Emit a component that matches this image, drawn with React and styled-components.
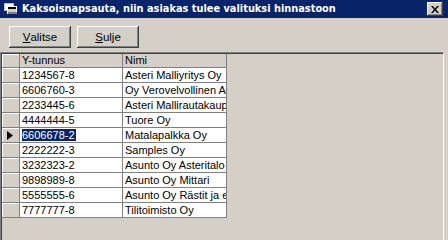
import React from 'react';
import styled, { createGlobalStyle } from 'styled-components';

const GlobalStyle = createGlobalStyle`
  html, body {
    margin: 0;
    padding: 0;
    background: #d4d0c8;
    overflow: hidden;
  }
  * { box-sizing: border-box; }
`;

const Window = styled.div`
  width: 448px;
  height: 100vh;
  min-height: 218px;
  display: flex;
  flex-direction: column;
  background: #d4d0c8;
  font-family: "Liberation Sans", Arial, sans-serif;
  font-size: 11px;
  color: #000;
  overflow: hidden;
`;

const TitleBar = styled.div`
  height: 18px;
  flex: none;
  display: flex;
  align-items: center;
  padding: 0 5px 0 4px;
  background: #0a246a;
  color: #fff;
  font-family: "DejaVu Sans", Verdana, sans-serif;
  font-weight: bold;
  font-size: 9.8px;
`;

const TitleText = styled.span`
  margin-left: 4px;
  flex: 1;
  white-space: nowrap;
  line-height: 18px;
`;

const CloseButton = styled.div`
  width: 16px;
  height: 14px;
  display: flex;
  align-items: center;
  justify-content: center;
  background: #d4d0c8;
  box-shadow: inset -1px -1px #404040, inset 1px 1px #fff, inset -2px -2px #808080;
`;

const Toolbar = styled.div`
  flex: none;
  display: flex;
  gap: 6px;
  padding: 8px 0 0 9px;
  height: 34px;
`;

const Button = styled.div`
  width: 62px;
  height: 22px;
  display: flex;
  align-items: center;
  justify-content: center;
  background: #d4d0c8;
  box-shadow: inset -1px -1px #404040, inset 1px 1px #fff, inset -2px -2px #808080;
  font-size: 11.5px;

  u { text-decoration: underline; }
`;

const Grid = styled.div`
  width: 444px;
  flex: 1;
  border-top: 1px solid #808080;
  border-left: 1px solid #808080;
  border-right: 1px solid #fff;
  box-shadow: inset 1px 1px #404040;
  padding: 1px 0 0 1px;
  background: #d4d0c8;
  overflow: hidden;
`;

const Row = styled.div`
  display: grid;
  grid-template-columns: 18px 103px 104px;
  height: ${p => (p.$header ? 14 : 15)}px;
`;

const Cell = styled.div`
  border-right: 1px solid #808080;
  border-bottom: 1px solid #808080;
  background: ${p => (p.$gray ? '#d4d0c8' : '#fff')};
  padding-left: 2px;
  line-height: ${p => (p.$header ? 13 : 14)}px;
  white-space: nowrap;
  overflow: hidden;
`;

const RowHead = styled.div`
  border-right: 1px solid #808080;
  border-bottom: 1px solid #808080;
  background: #d4d0c8;
  box-shadow: inset 1px 1px #fff;
  display: flex;
  align-items: center;
  padding-left: 5px;
`;

const Selected = styled.span`
  background: #0a246a;
  color: #fff;
  padding: 0 1px 0 0;
`;

const rows = [
  ['1234567-8', 'Asteri Malliyritys Oy'],
  ['6606760-3', 'Oy Verovelvollinen Ab'],
  ['2233445-6', 'Asteri Mallirautakauppa'],
  ['4444444-5', 'Tuore Oy'],
  ['6606678-2', 'Matalapalkka Oy'],
  ['2222222-3', 'Samples Oy'],
  ['3232323-2', 'Asunto Oy Asteritalo'],
  ['9898989-8', 'Asunto Oy Mittari'],
  ['5555555-6', 'Asunto Oy Rästit ja ees'],
  ['7777777-8', 'Tilitoimisto Oy'],
];

const WindowIcon = () => (
  <svg width="14" height="12" viewBox="0 0 14 12">
    <rect x="0.5" y="0.5" width="9" height="7" fill="#fff" stroke="#c0c0c0" />
    <rect x="3.5" y="3.5" width="9" height="7" fill="#d4d0c8" stroke="#fff" />
    <rect x="4" y="4" width="8" height="2" fill="#000" />
    <rect x="4" y="9" width="9" height="2" fill="#808080" />
  </svg>
);

const App = () => (
  <>
    <GlobalStyle />
    <Window>
      <TitleBar>
        <WindowIcon />
        <TitleText>Kaksoisnapsauta, niin asiakas tulee valituksi hinnastoon</TitleText>
        <CloseButton>
          <svg width="8" height="7" viewBox="0 0 8 7">
            <path d="M0 0h2l2 2.5L6 0h2L5 3.5 8 7H6L4 4.5 2 7H0l3-3.5z" fill="#000" />
          </svg>
        </CloseButton>
      </TitleBar>
      <Toolbar>
        <Button><u>V</u>alitse</Button>
        <Button><u>S</u>ulje</Button>
      </Toolbar>
      <Grid>
        <Row $header>
          <RowHead />
          <Cell $gray $header>Y-tunnus</Cell>
          <Cell $gray $header>Nimi</Cell>
        </Row>
        {rows.map(([id, name], i) => (
          <Row key={id}>
            <RowHead>
              {i === 4 && (
                <svg width="6" height="9" viewBox="0 0 6 9">
                  <path d="M0 0l6 4.5L0 9z" fill="#000" />
                </svg>
              )}
            </RowHead>
            <Cell>{i === 4 ? <Selected>{id}</Selected> : id}</Cell>
            <Cell>{name}</Cell>
          </Row>
        ))}
      </Grid>
    </Window>
  </>
);

export default App;
